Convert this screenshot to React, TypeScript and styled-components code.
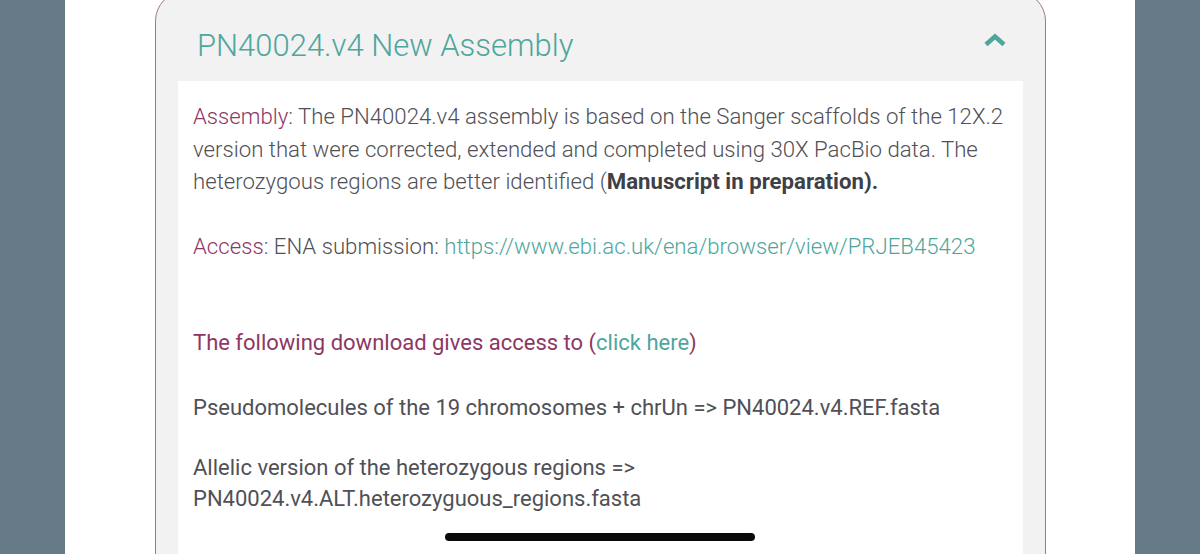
import styled, { createGlobalStyle } from 'styled-components';

const GlobalStyle = createGlobalStyle`
    html, body {
        margin: 0;
        padding: 0;
        background: #ffffff;
    }
    body {
        font-family: Roboto, "Noto Sans", Arial, sans-serif;
    }
`;

const Screen = styled.div`
    display: flex;
    height: 554px;
    overflow: hidden;
`;

const SideBar = styled.div`
    width: 65px;
    flex-shrink: 0;
    background: #667a88;
`;

const PageBody = styled.main`
    flex: 1;
    min-width: 0;
    background: #ffffff;
    padding: 0 89px 0 90px;
`;

const Card = styled.section`
    margin-top: -9px;
    border: 1.5px solid #a07493;
    border-radius: 30px;
    background: #f2f2f2;
    padding: 0 22px;
    min-height: 640px;
`;

const CardHeader = styled.header`
    display: flex;
    align-items: flex-start;
    justify-content: space-between;
    height: 89px;
    box-sizing: border-box;
    padding: 35px 16px 0 19px;
`;

const Title = styled.h2`
    margin: 0;
    font-size: 31px;
    line-height: 37px;
    font-weight: 300;
    color: #4ea69d;
`;

const Chevron = styled.svg`
    margin-top: 6px;
    display: block;
`;

const CardBody = styled.div`
    background: #ffffff;
    padding: 19px 15px 40px;
    color: #505056;
`;

const Paragraph = styled.p<{ $light?: boolean; $gap?: number }>`
    margin: ${(p) => p.$gap ?? 0}px 0 0;
    font-size: ${(p) => (p.$light ? 22.2 : 22)}px;
    line-height: ${(p) => (p.$light ? 32.5 : 31.5)}px;
    font-weight: ${(p) => (p.$light ? 300 : 400)};
`;

const Label = styled.span`
    color: #8c3764;
`;

const Link = styled.a`
    color: #4ea69d;
    text-decoration: none;
`;

const Strong = styled.b`
    font-weight: 700;
    color: #3f3f46;
`;

const HomeIndicator = styled.div`
    position: fixed;
    left: 445px;
    top: 533px;
    width: 310px;
    height: 8px;
    border-radius: 4px;
    background: #0a0a0a;
`;

export default function App() {
    return (
        <>
            <GlobalStyle />
            <Screen>
                <SideBar />
                <PageBody>
                    <Card>
                        <CardHeader>
                            <Title>PN40024.v4 New Assembly</Title>
                            <Chevron width="24" height="14" viewBox="0 0 24 14">
                                <polyline points="3,11.5 12,3.5 21,11.5" fill="none" stroke="#4ea69d" strokeWidth="4.6" />
                            </Chevron>
                        </CardHeader>
                        <CardBody>
                            <Paragraph $light>
                                <Label>Assembly</Label>: The PN40024.v4 assembly is based on the Sanger scaffolds of the 12X.2 version that were corrected, extended and completed using 30X PacBio data. The heterozygous regions are better identified (<Strong>Manuscript in preparation).</Strong>
                            </Paragraph>
                            <Paragraph $light $gap={32}>
                                <Label>Access</Label>: ENA submission: <Link href="#">https://www.ebi.ac.uk/ena/browser/view/PRJEB45423</Link>
                            </Paragraph>
                            <Paragraph $gap={64.5}>
                                <Label>The following download gives access to (</Label>
                                <Link href="#">click here</Link>
                                <Label>)</Label>
                            </Paragraph>
                            <Paragraph $gap={33.5}>
                                Pseudomolecules of the 19 chromosomes + chrUn =&gt; PN40024.v4.REF.fasta
                            </Paragraph>
                            <Paragraph $gap={28.5}>
                                Allelic version of the heterozygous regions =&gt;
                                <br />
                                PN40024.v4.ALT.heterozyguous_regions.fasta
                            </Paragraph>
                        </CardBody>
                    </Card>
                </PageBody>
                <SideBar />
            </Screen>
            <HomeIndicator />
        </>
    );
}
